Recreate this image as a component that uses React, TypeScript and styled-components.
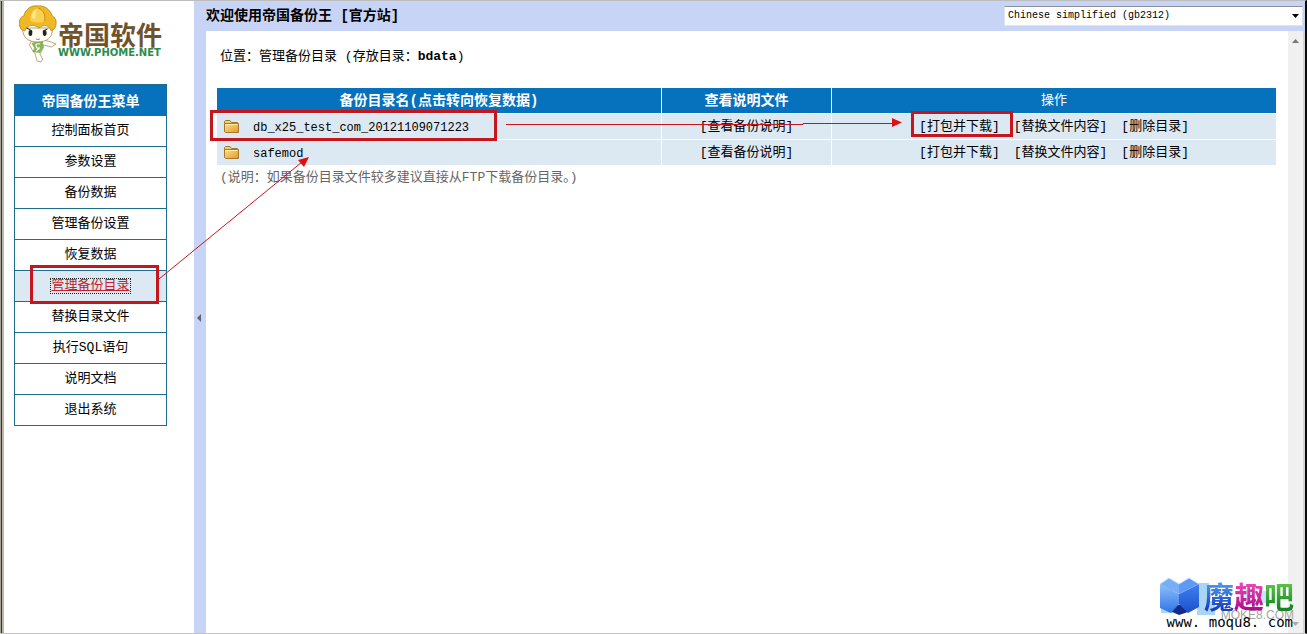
import React from 'react';
import styled, { createGlobalStyle, css } from 'styled-components';

const GlobalStyle = createGlobalStyle`
  * { box-sizing: border-box; }
  html, body, #root { height: 100%; }
  body {
    margin: 0;
    overflow: hidden;
    background: #fff;
    color: #000;
    font: 13px/16px "Liberation Mono", "Noto Sans CJK SC", monospace;
  }
  a { color: inherit; text-decoration: none; }
`;

const Frame = styled.div`
  position: relative;
  display: flex;
  min-height: 100vh;
  border-top: 1px solid #bdbdbd;
  border-bottom: 1px solid #c4c4c4;
  border-right: 2px solid #0a0a0a;
`;

const WindowEdge = styled.div`
  flex: none;
  width: 4px;
  border-left: 1px solid #a8a698;
  border-right: 2px solid #bab8ac;
  background: #33332b;
`;

const Sidebar = styled.aside`
  flex: none;
  width: 190px;
  padding: 3px 27px 0 10px;
`;

const Brand = styled.a`
  display: flex;
  height: 80px;
  padding-left: 5px;
`;

const BrandText = styled.span`
  display: flex;
  flex-direction: column;
  padding-top: 16px;
  white-space: nowrap;
`;

const BrandName = styled.span`
  color: #70532c;
  font: bold 26px/28px "Noto Sans CJK SC", sans-serif;
`;

const BrandUrl = styled.span`
  color: #2c8a4c;
  font: bold 10px/10px "DejaVu Sans", sans-serif;
`;

const Menu = styled.nav`
  border: 1px solid #1d6d8c;
  border-bottom: 0;
  text-align: center;
`;

const MenuTitle = styled.h2`
  margin: 0;
  background: #0671bd;
  color: #fff;
  font: bold 14px/30px "Noto Sans CJK SC", sans-serif;
  border-bottom: 1px solid #1d6d8c;
`;

const MenuItem = styled.a<{ $active?: boolean }>`
  display: block;
  border-bottom: 1px solid #1d6d8c;
  line-height: 30px;
  ${(p) =>
    p.$active &&
    css`
      background: #dce9f3;
      color: #c8202c;
      span {
        display: inline-block;
        line-height: 14px;
        outline: 1px dotted #222;
        text-decoration: underline;
      }
    `}
`;

const Splitter = styled.button`
  flex: none;
  width: 12px;
  padding: 0 0 0 2px;
  border: 0;
  background: #c8d4f6;
  text-align: left;
`;

const Main = styled.div`
  flex: 1;
  display: flex;
  flex-direction: column;
  min-width: 0;
`;

const TopBar = styled.header`
  display: flex;
  justify-content: space-between;
  align-items: center;
  height: 30px;
  padding-right: 2px;
  background: #c8d4f6;
`;

const Welcome = styled.h1`
  margin: 0;
  font: bold 14px/16px "Liberation Mono", "Noto Sans CJK SC", monospace;
`;

const SelectWrap = styled.label`
  position: relative;
  width: 299px;
  height: 20px;
`;

const Select = styled.select`
  appearance: none;
  width: 100%;
  height: 20px;
  padding: 0 3px;
  border: 1px solid #dfe3ec;
  border-top-color: #8b8f99;
  border-radius: 0;
  background: #fff;
  color: #000;
  font: 10px/16px "Liberation Mono", monospace;
`;

const SelectArrow = styled.svg`
  position: absolute;
  right: 4px;
  top: 8px;
  pointer-events: none;
`;

const Body = styled.div`
  flex: 1;
  display: flex;
`;

const Content = styled.main`
  flex: 1;
  min-width: 0;
  padding: 18px 11px 0 10px;
`;

const Location = styled.p`
  margin: 0 0 22px;
  padding-left: 4px;
`;

const Table = styled.table`
  width: 100%;
  table-layout: fixed;
  border-spacing: 1px;
`;

const Th = styled.th<{ $width: string; $plain?: boolean }>`
  width: ${(p) => p.$width};
  height: 25px;
  padding: 0;
  background: #0671bd;
  color: #fff;
  font-size: ${(p) => (p.$plain ? '13px' : '14px')};
  font-weight: ${(p) => (p.$plain ? 'normal' : 'bold')};
`;

const Td = styled.td<{ $align?: string }>`
  height: 25px;
  padding: 0 6px;
  background: #dce9f3;
  line-height: 16px;
  text-align: ${(p) => p.$align || 'center'};
`;

const DirLink = styled.a`
  display: flex;
  align-items: center;
  gap: 13px;
  font-size: 12px;

  span { padding-top: 2px; }
`;

const Actions = styled.div`
  display: flex;
  justify-content: center;
  gap: 14px;
`;

const Note = styled.p`
  margin: 4px 0 0;
  padding-left: 4px;
  color: #666;
`;

const ScrollBar = styled.div`
  display: flex;
  flex: none;
  flex-direction: column;
  justify-content: space-between;
  align-items: center;
  width: 17px;
  padding: 7px 0 6px;
  background: #f0f0f0;
  border-right: 2px solid #d4d4d4;
`;

const Annotations = styled.svg`
  position: absolute;
  inset: 0;
  width: 100%;
  height: 100%;
  pointer-events: none;
`;

const Watermark = styled.div`
  position: absolute;
  right: 8px;
  bottom: 2px;
  width: 138px;
  height: 54px;
`;

const Cube = styled.svg`
  position: absolute;
  left: 0;
  top: 0;
`;

const WatermarkName = styled.div`
  position: absolute;
  left: 45px;
  top: 1px;
  font: bold 30px/34px "Noto Sans CJK SC", sans-serif;
  white-space: nowrap;
`;

const Tinted = styled.span<{ $from: string; $to: string }>`
  background: linear-gradient(${(p) => p.$from} 20%, ${(p) => p.$to} 80%);
  background-clip: text;
  color: transparent;
`;

const WatermarkShade = styled.div`
  position: absolute;
  right: 3px;
  top: 31px;
  color: #a4a4a4;
  font: 12px/14px "Liberation Sans", sans-serif;
`;

const WatermarkUrl = styled.div`
  position: absolute;
  right: 4px;
  bottom: 1px;
  font: 14px/16px "DejaVu Sans Mono", monospace;
  white-space: nowrap;
`;

const Mascot = () => (
  <svg width="39" height="60" viewBox="0 0 41 60" preserveAspectRatio="none" aria-hidden="true">
    <path d="M14 35L11 41L14 46L17 50L19 57L23 58L25 55L22 50L25 45L26 41L34 43L39 40L34 38L26 36Z" fill="#fff" stroke="#a98f5c" strokeWidth="0.8" />
    <path d="M13 39L25 36L26 43L22 49L14 48L16 44Z" fill="#86b85a" />
    <path d="M22 40q-5 -1 -4 2t3 2t-3 3" fill="none" stroke="#fff" strokeWidth="1.2" />
    <path d="M4 24C3 33 10 38 19 38C29 38 36 34 35 24Z" fill="#fffdf6" stroke="#aa8444" strokeWidth="0.8" />
    <path d="M2 25C-1 20 0 13 5 12C7 4 14 1 20 2C27 1 33 6 35 12C40 14 40 21 37 25L34 27C32 21 26 20 21 24C16 20 9 20 6 27Z" fill="#f0b822" stroke="#b3841c" strokeWidth="0.8" />
    <path d="M12 17C11 10 15 5 20 4C26 6 28 11 27 17C22 19 17 19 12 17Z" fill="#f8d250" />
    <path d="M14 14C13 9 16 6 19 5C17 9 17 12 17 15Z" fill="#fdeb96" />
    <path d="M20 4C26 6 28 11 27 17" fill="none" stroke="#c98d12" />
    <path d="M8 24L14 27M30 25L25 27" stroke="#222" />
    <ellipse cx="12" cy="29" rx="2" ry="3" fill="#222" />
    <ellipse cx="27" cy="29" rx="2" ry="3" fill="#222" />
    <path d="M18 35q2 1 4 0" stroke="#c66" fill="none" />
  </svg>
);

const Folder = () => (
  <svg width="17" height="15" viewBox="0 0 17 15" aria-hidden="true">
    <defs>
      <linearGradient id="folder" x1="0" y1="0" x2="1" y2="1">
        <stop offset="0" stopColor="#fde08a" />
        <stop offset="1" stopColor="#e29a2a" />
      </linearGradient>
    </defs>
    <path d="M1.500 12.500V2.500L2.500 1.500H7L8.500 3.500H14.500V12.500Z" fill="#f6cf6c" stroke="#a9752a" />
    <path d="M1.500 4.500H15.500V13.500H2.500L1.500 12.500Z" fill="url(#folder)" stroke="#a9752a" />
    <path d="M2.500 5.500H14.500" stroke="#fff0b0" />
  </svg>
);

const menuItems = [
  '控制面板首页', '参数设置', '备份数据', '管理备份设置', '恢复数据',
  '管理备份目录', '替换目录文件', '执行SQL语句', '说明文档', '退出系统',
];

const directories = ['db_x25_test_com_20121109071223', 'safemod'];

export default function App() {
  return (
    <>
      <GlobalStyle />
      <Frame>
        <WindowEdge />
        <Sidebar>
          <Brand href="#">
            <Mascot />
            <BrandText>
              <BrandName>帝国软件</BrandName>
              <BrandUrl>WWW.PHOME.NET</BrandUrl>
            </BrandText>
          </Brand>
          <Menu>
            <MenuTitle>帝国备份王菜单</MenuTitle>
            {menuItems.map((item) => (
              <MenuItem key={item} href="#" $active={item === '管理备份目录'}>
                <span>{item}</span>
              </MenuItem>
            ))}
          </Menu>
        </Sidebar>
        <Splitter type="button" aria-label="收起菜单">
          <svg width="6" height="8" viewBox="0 0 6 8"><path d="M5 0V8L1 4Z" fill="#5c6378" /></svg>
        </Splitter>
        <Main>
          <TopBar>
            <Welcome>欢迎使用帝国备份王 <a href="#">[官方站]</a></Welcome>
            <SelectWrap>
              <Select aria-label="Language">
                <option>Chinese simplified (gb2312)</option>
              </Select>
              <SelectArrow width="7" height="4" viewBox="0 0 7 4"><path d="M0 0H7L3.500 4Z" /></SelectArrow>
            </SelectWrap>
          </TopBar>
          <Body>
            <Content>
              <Location>位置：<a href="#">管理备份目录</a> (存放目录：<b>bdata</b>)</Location>
              <Table>
                <thead>
                  <tr>
                    <Th $width="42%">备份目录名(点击转向恢复数据)</Th>
                    <Th $width="16%">查看说明文件</Th>
                    <Th $width="42%" $plain>操作</Th>
                  </tr>
                </thead>
                <tbody>
                  {directories.map((name) => (
                    <tr key={name}>
                      <Td $align="left"><DirLink href="#"><Folder /><span>{name}</span></DirLink></Td>
                      <Td><a href="#">[查看备份说明]</a></Td>
                      <Td>
                        <Actions>
                          <a href="#">[打包并下载]</a>
                          <a href="#">[替换文件内容]</a>
                          <a href="#">[删除目录]</a>
                        </Actions>
                      </Td>
                    </tr>
                  ))}
                </tbody>
              </Table>
              <Note>(说明：如果备份目录文件较多建议直接从FTP下载备份目录。)</Note>
            </Content>
            <ScrollBar>
              <svg width="7" height="5" viewBox="0 0 7 5"><path d="M0 5L3.500 1L7 5Z" fill="#777" /></svg>
              <svg width="7" height="5" viewBox="0 0 7 5"><path d="M0 0L3.500 4L7 0Z" fill="#aaa" /></svg>
            </ScrollBar>
          </Body>
        </Main>
        <Annotations aria-hidden="true">
          <g fill="none" stroke="#c4161c" strokeWidth="3">
            <rect x="211.500" y="110.500" width="284" height="28" />
            <rect x="912.500" y="111.500" width="99" height="23" />
            <rect x="31.500" y="265.500" width="126" height="36" />
          </g>
          <g stroke="#c4161c" strokeWidth="1">
            <path d="M506 123.500H803V122.500H893" fill="none" />
            <path d="M159 278L302 161" />
          </g>
          <path d="M892 117L902 121.500L892 126ZM309 156L298 159L304 166Z" fill="#e01010" />
        </Annotations>
        <Watermark>
          <Cube width="138" height="46" viewBox="0 0 138 46" aria-hidden="true">
            <defs>
              <linearGradient id="cubeLeft" x1="0" y1="0" x2="0" y2="1">
                <stop offset="0" stopColor="#8cc0fb" />
                <stop offset="1" stopColor="#2f74e6" />
              </linearGradient>
              <linearGradient id="cubeRight" x1="0" y1="0" x2="0" y2="1">
                <stop offset="0" stopColor="#3f80ee" />
                <stop offset="1" stopColor="#1d50d0" />
              </linearGradient>
            </defs>
            <path d="M2 8H14V36H2ZM38 6H50V24H56V38H38Z" fill="#a9d6f4" />
            <path d="M86 12H96V28H86ZM100 14H108V26H100Z" fill="#c9e6f8" />
            <path d="M11 24L20 28L29 24V35L20 38L11 34Z" fill="#142c88" />
            <path d="M1 7L20 17V27L12 36L1 31Z" fill="url(#cubeLeft)" />
            <path d="M20 17L40 7V30L29 36L20 27Z" fill="url(#cubeRight)" />
            <path d="M1 7L10 1L20 7L20 17Z" fill="#79adf6" />
            <path d="M20 7L30 1L40 7L20 17Z" fill="#5e9af4" />
            <path d="M1 7L10 1L20 7L30 1L40 7" fill="none" stroke="#c7e0ff" />
          </Cube>
          <WatermarkShade>MOKE8.COM</WatermarkShade>
          <WatermarkName>
            <Tinted $from="#4aa0f4" $to="#1c3fc0">魔</Tinted>
            <Tinted $from="#f04ab8" $to="#b0108c">趣</Tinted>
            <Tinted $from="#62c84a" $to="#168428">吧</Tinted>
          </WatermarkName>
          <WatermarkUrl>www. moqu8. com</WatermarkUrl>
        </Watermark>
      </Frame>
    </>
  );
}
